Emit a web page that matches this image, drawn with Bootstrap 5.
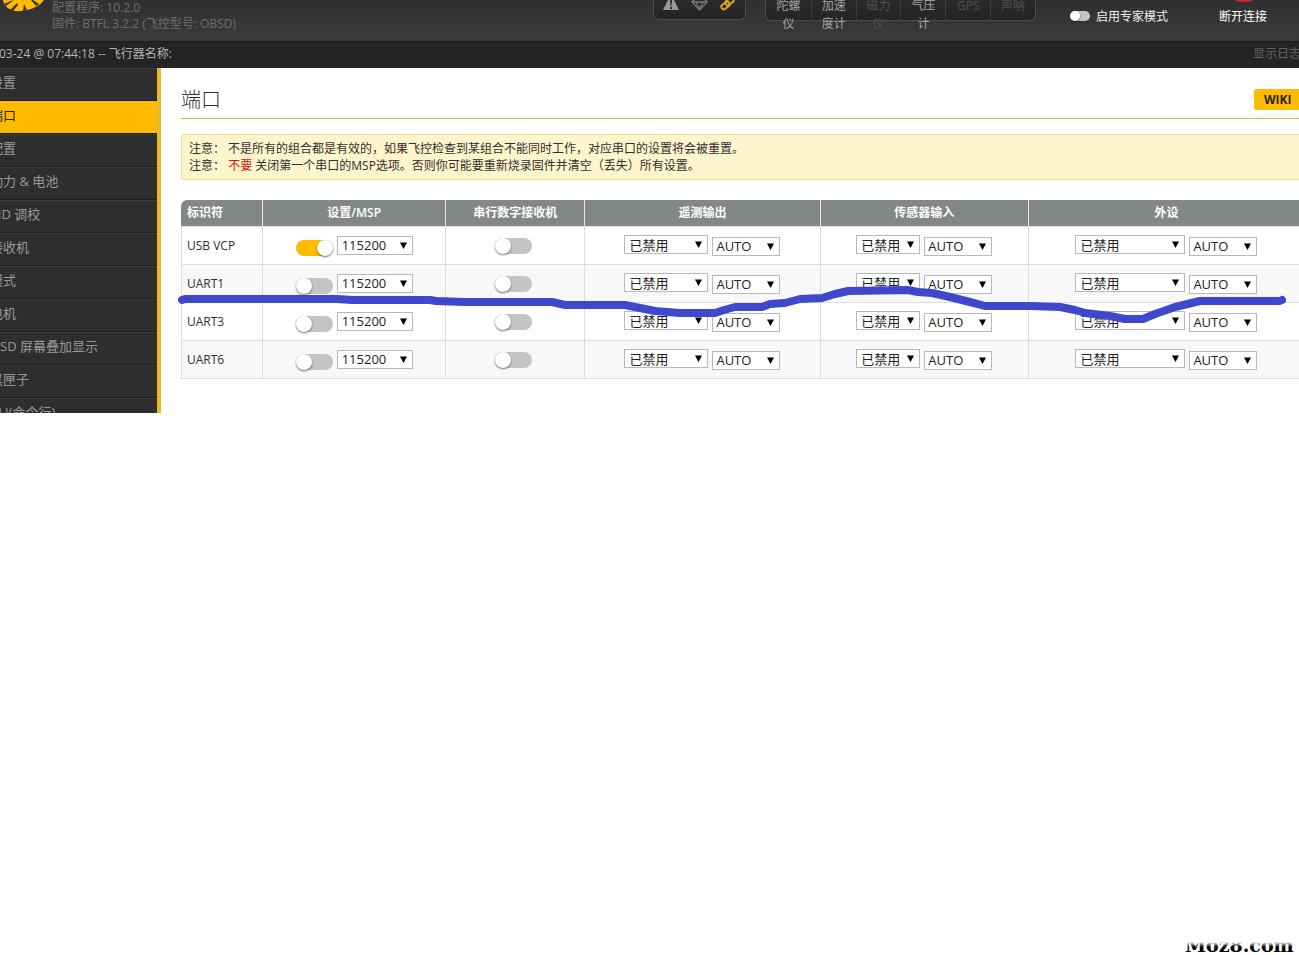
<!DOCTYPE html>
<html lang="zh-CN">
<head>
<meta charset="utf-8">
<meta name="viewport" content="width=device-width, initial-scale=1">
<title>端口</title>
<link href="https://cdn.jsdelivr.net/npm/bootstrap@5.3.0/dist/css/bootstrap.min.css" rel="stylesheet">
<style>
body{font-family:"Open Sans","Noto Sans CJK SC",sans-serif;font-size:12px;line-height:16px;color:#303030;background:#fff;min-height:100vh;overflow-x:hidden}
.topbar{height:41px;background:linear-gradient(#2f3130,#393b3a);color:#7d7d7d}
.logo{width:44px;height:14px}
.fw-info{color:#6d6d6d;margin-left:8px}
.pill{background:linear-gradient(#2a2a2a,#242424);border:1px solid #4c4c4c;border-top:0;border-radius:0 0 6px 6px}
.status-pill{width:93px;height:20px;margin-right:19px}
.sensors{width:271px;height:21px;margin-right:33px}
.sensor{width:45px;padding:0 8px;line-height:18px;margin-top:-3px;text-align:center;color:#4f4f4f;height:48px}
.sensor + .sensor{border-left:1px solid #3c3c3c;border-image:linear-gradient(#3c3c3c 23px,transparent 23px) 1}
.sensor.on{color:#a4a4a4}
.expert{color:#eee;width:149px;padding-top:9px}
.disconnect{color:#fff;font-size:12px;line-height:16px;width:81px;padding:9px 32px 0 0;border:0;background:none;white-space:nowrap}
.disc-dot{width:26px;height:2px;right:42px}
.toggle{appearance:none;flex:none;width:37px;height:16px;margin:0;border-radius:8px;background:#c4c4c4;display:block}
.toggle::before{content:"";display:block;width:16px;height:16px;border-radius:50%;background:#fff;box-shadow:0 1px 2px rgba(0,0,0,.55)}
.toggle:checked{background:#ffbb00}
.toggle:checked::before{margin-left:auto}
.toggle.mini{width:20px;height:10px;margin:2px 6px 0 1px}
.toggle.mini::before{width:10px;height:10px}
.logbar{height:27px;background:#242424;color:#b5b5b5;border-top:1px solid #1c1c1c;padding-top:4px}
.logbar span{margin-left:-1px}
.logbar a{color:#636363;width:46px}
.side{width:161px;height:345px;background:#2e2e2e;border-right:4px solid #e9b92c;overflow:hidden}
.side a{display:block;height:33px;line-height:27px;font-size:13px;color:#999;border-top:1px solid #3e3e3e;border-bottom:1px solid #1d1d1d;text-decoration:none;white-space:nowrap}
.side a span{margin-left:-10px}
.side a.active{background:#ffbb00;color:#2a2000;border-color:#ffbb00 #ffbb00 #1d1d1d}
.main{padding:20px 0 0 20px;min-width:0}
.title{font-size:20px;line-height:24px;font-weight:300;margin:0}
.headline{height:31px;border-bottom:1px solid #d9b52f}
.wiki{background:#ffbb00;color:#2a2000;font-size:12px;font-weight:700;line-height:21px;border-radius:3px 0 0 3px;width:45px;padding-left:10px;height:21px;margin-top:1px;text-decoration:none}
.note{margin:15px 0 20px;background:#fff5cc;border:1px solid #ebe08a;border-right:0;border-radius:3px 0 0 3px;padding:5px 7px;line-height:17px}
.note strong{color:#d11;font-weight:400}
.ports{table-layout:fixed;width:100%;border-collapse:separate;border-spacing:0}
.ports th{background:#828885;color:#fff;font-weight:600;height:27px;padding:0 6px;text-align:center;border-right:1px solid #ececec;border-bottom:1px solid #ddd}
.ports th:first-child{text-align:left;border-radius:6px 0 0 0}
.ports td{height:38px;padding:0 6px;border-right:1px solid #ddd;border-bottom:1px solid #ddd}
.ports td:first-child{border-left:1px solid #ddd;padding-left:5px}
.ports th:last-child,.ports td:last-child{border-right:0;padding-left:11px}
.ports tbody tr:nth-child(even){background:#f8f8f8}
.c1{width:82px}.c2{width:16.4%}.c3{width:12.4%}.c4{width:21.1%}.c5{width:18.6%}
.pair{height:21px}
.rx{padding-right:3px}
.pick{appearance:none;height:19px;font-size:13px;line-height:17px;padding:0 4px;color:#222;border:1px solid #b9b9b9;border-radius:0;background:#fff url("data:image/svg+xml,%3Csvg xmlns='http://www.w3.org/2000/svg' width='7' height='7'%3E%3Cpath d='M0 0.5H7L3.5 7Z'/%3E%3C/svg%3E") no-repeat right 5px center}
.zh{padding-top:2px;line-height:15px}
.w-rate{width:76px}.w-auto2{width:68px;padding-left:3px}.w-tel{width:84px}.w-sen{width:64px}.w-per{width:110px}
.stroke{left:-3px;top:84px;width:1108px;max-width:100%;height:44px;pointer-events:none}
.mark-txt{right:0;bottom:0;width:114px;height:18px}
</style>
</head>
<body class="d-flex flex-column position-relative">
<header class="topbar d-flex overflow-hidden">
  <svg class="logo" viewBox="0 0 44 14" aria-hidden="true"><path d="M3 0C4 7 11 12 21 11C32 10 41 5 44 0Z" fill="#ffbb00"/><path d="M4 4L11 1L14 0L6 6ZM10 10L17 3L18 5L13 11ZM23 11L24 4L27 10ZM31 0L36 6L39 4L33 0Z" fill="#3a3421"/></svg>
  <div class="fw-info text-nowrap">配置程序: 10.2.0<br>固件: BTFL 3.2.2 (飞控型号: OBSD)</div>
  <div class="pill status-pill ms-auto flex-shrink-0">
    <svg class="d-block" width="91" height="14" viewBox="0 0 91 14" aria-hidden="true"><path d="M9 10L15 -2H19L25 10Z" fill="#999"/><path d="M16 0H18L17.500 6H16.500ZM16 7H18V9H16Z" fill="#282828"/><path d="M38 2H53L45.500 10ZM42 2L45.500 9L49 2M41 -1L38 2M50 -1L53 2" fill="none" stroke="#777" stroke-width="1.300"/><g fill="none" stroke="#d9a520" stroke-width="2"><rect x="67" y="3" width="9" height="5" rx="2.500" transform="rotate(-38 71.500 5.500)"/><rect x="71" y="-1" width="9" height="5" rx="2.500" transform="rotate(-38 75.500 1.500)"/></g></svg>
  </div>
  <div class="pill sensors d-flex flex-shrink-0">
    <div class="sensor on">陀螺仪</div><div class="sensor on">加速度计</div><div class="sensor">磁力仪</div><div class="sensor on">气压计</div><div class="sensor">GPS</div><div class="sensor">声呐</div>
  </div>
  <label class="expert d-flex align-items-start text-nowrap"><input type="checkbox" class="toggle mini">启用专家模式</label>
  <button class="disconnect position-relative d-flex justify-content-end align-items-start" type="button"><svg class="disc-dot position-absolute top-0" viewBox="0 0 26 2" aria-hidden="true"><path d="M3 0H23Q13 4 3 0Z" fill="#d22"/></svg>断开连接</button>
</header>
<div class="logbar d-flex justify-content-between overflow-hidden text-nowrap"><span>03-24 @ 07:44:18 -- 飞行器名称:</span><a href="#" class="text-decoration-none">显示日志</a></div>
<div class="d-flex">
  <nav class="side flex-shrink-0">
    <a href="#"><span>设置</span></a><a href="#" class="active"><span>端口</span></a><a href="#"><span>配置</span></a><a href="#"><span>动力 &amp; 电池</span></a><a href="#"><span>PID 调校</span></a><a href="#"><span>接收机</span></a><a href="#"><span>模式</span></a><a href="#"><span>电机</span></a><a href="#"><span>OSD 屏幕叠加显示</span></a><a href="#"><span>黑匣子</span></a><a href="#"><span>CLI(命令行)</span></a>
  </nav>
  <main class="main flex-grow-1">
    <div class="headline d-flex justify-content-between"><h1 class="title">端口</h1><a href="#" class="wiki">WIKI</a></div>
    <div class="note">注意： 不是所有的组合都是有效的，如果飞控检查到某组合不能同时工作，对应串口的设置将会被重置。<br>注意： <strong>不要</strong> 关闭第一个串口的MSP选项。否则你可能要重新烧录固件并清空（丢失）所有设置。</div>
    <div class="position-relative">
      <table class="ports">
        <colgroup><col class="c1"><col class="c2"><col class="c3"><col class="c4"><col class="c5"><col></colgroup>
        <thead><tr><th>标识符</th><th>设置/MSP</th><th>串行数字接收机</th><th>遥测输出</th><th>传感器输入</th><th>外设</th></tr></thead>
        <tbody id="rows"></tbody>
      </table>
      <svg class="stroke position-absolute" viewBox="178 284 1108 44" preserveAspectRatio="none" aria-hidden="true"><path d="M182 300L185 299H337L352 300H430L436 301L465 302H552L565 305H625L640 308L655 311L680 313H715L724 310L735 307H762L770 304L785 303L800 299L822 298L835 294L848 291L908 290L918 292L932 293L950 297L970 302L985 306H1030L1060 307L1075 310L1085 313L1110 316L1125 319H1143L1155 314L1175 307L1200 301H1280L1282 300" fill="none" stroke="#3f48cc" stroke-width="8" stroke-linecap="round" stroke-linejoin="round"/></svg>
    </div>
  </main>
</div>
<svg class="mark-txt position-absolute" viewBox="0 0 114 18"><defs><linearGradient id="fade" gradientUnits="userSpaceOnUse" x1="0" y1="5" x2="0" y2="10"><stop offset="0" stop-color="#fff"/><stop offset="1" stop-color="#000"/></linearGradient></defs><text x="0" y="15" font-family="DejaVu Serif" font-weight="700" font-size="19" fill="url(#fade)">Moz8.com</text></svg>
<script src="https://cdn.jsdelivr.net/npm/bootstrap@5.3.0/dist/js/bootstrap.bundle.min.js"></script>
<script>
const pick=(port,name,cls,val)=>`<select class="pick ${cls}" aria-label="${port} ${name}"><option>${val}</option></select>`;
const pair=(p,n,w)=>`<td><div class="pair d-flex justify-content-center gap-1">${pick(p,n,w+' zh align-self-start','已禁用')}${pick(p,n+'速率','w-auto2 align-self-end','AUTO')}</div></td>`;
document.getElementById('rows').innerHTML=['USB VCP','UART1','UART3','UART6'].map((p,i)=>`<tr><td>${p}</td>
<td><div class="pair d-flex justify-content-center align-items-center"><input type="checkbox" class="toggle mt-1 me-1" aria-label="${p} MSP" ${i?'':'checked'}>${pick(p,'MSP速率','w-rate','115200')}</div></td>
<td><div class="rx d-flex justify-content-center"><input type="checkbox" class="toggle" aria-label="${p} 串行数字接收机"></div></td>
${pair(p,'遥测输出','w-tel')}${pair(p,'传感器输入','w-sen')}${pair(p,'外设','w-per')}</tr>`).join('');
</script>
</body>
</html>
